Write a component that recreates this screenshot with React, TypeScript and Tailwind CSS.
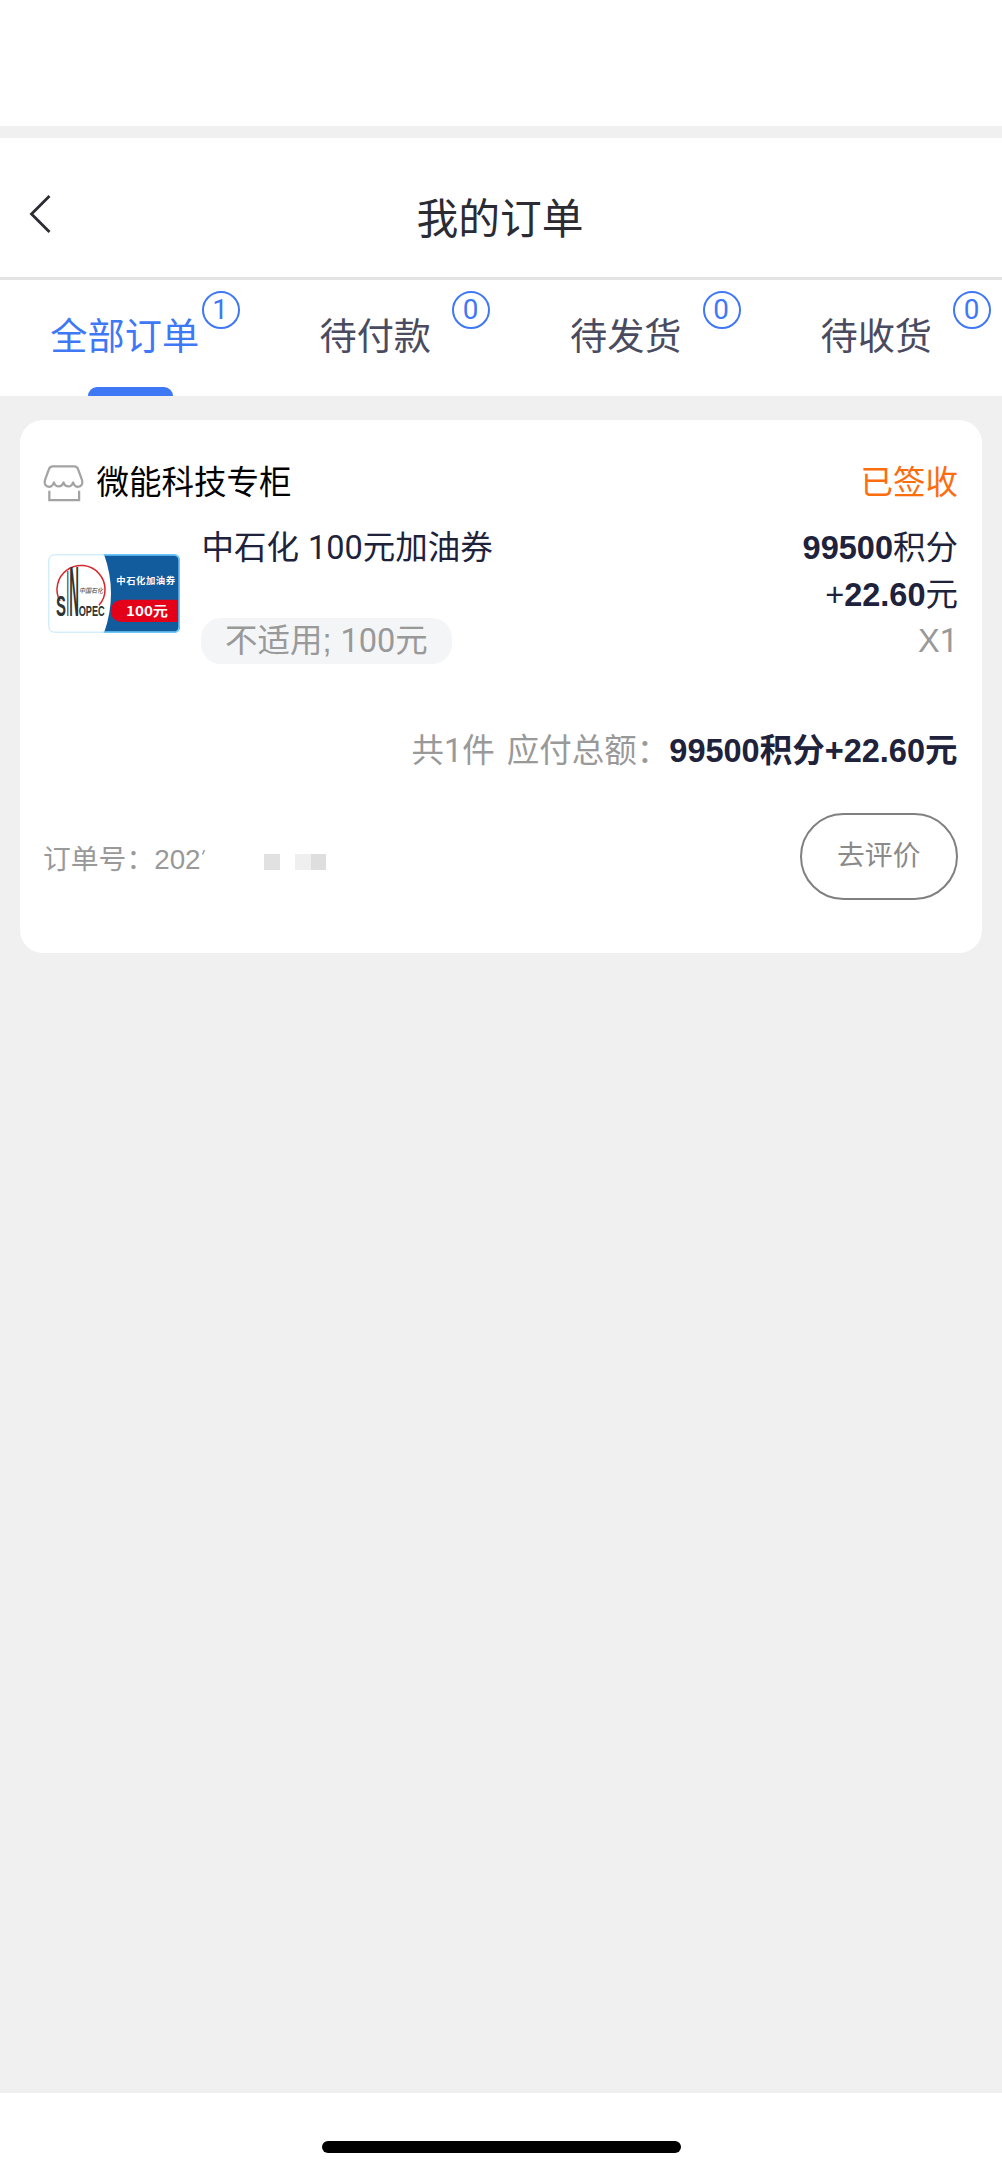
import React from "react";

const tabs = [
  { label: "全部订单", count: 1, active: true },
  { label: "待付款", count: 0, active: false },
  { label: "待发货", count: 0, active: false },
  { label: "待收货", count: 0, active: false },
];

function Num({ children }: { children: React.ReactNode }) {
  return <span className="font-['Roboto',sans-serif] leading-none">{children}</span>;
}

function BackIcon() {
  return (
    <svg width="24" height="40" viewBox="0 0 24 40" fill="none" stroke="#2b2b33" strokeWidth="2.8">
      <path d="M21.5 2 L3.500 20 L21.500 38" />
    </svg>
  );
}

function ShopIcon() {
  return (
    <svg className="-mt-[1px]" width="41" height="38" viewBox="0 0 42 38" fill="none" stroke="#a3a3a3" strokeWidth="2.3" strokeLinejoin="round">
      <path d="M10 2 H32 Q35 2 36 5 L40 16 Q41.500 22.500 35.500 23 Q32 22.500 30.800 18.500 Q29.500 22.500 26 22.500 Q22.500 22.500 21 18.500 Q19.500 22.500 16 22.500 Q12.500 22.500 11.200 18.500 Q10 22.500 6.500 23 Q0.500 22.500 2 16 L6 5 Q7 2 10 2 Z" />
      <path d="M6.500 27 V36.500 H37 V27" strokeLinejoin="miter" />
    </svg>
  );
}

function CouponImage() {
  return (
    <svg width="134" height="81" viewBox="22 39 402 243">
      <defs>
        <clipPath id="coupon">
          <rect x="26" y="43" width="395" height="235" rx="19" />
        </clipPath>
      </defs>
      <rect x="26" y="43" width="395" height="235" rx="19" fill="#ffffff" />
      <g clipPath="url(#coupon)">
        <path d="M192 40 Q236 160 192 282 H424 V40 Z" fill="#125c9e" />
        <path d="M414 179 H250 Q216 180 213 212 Q215 245 250 246 H414 Z" fill="#e30018" />
      </g>
      <path d="M192 44.500 H45 Q27.500 45 27.500 62 V260 Q28 276.500 45 276.500 H192" fill="none" stroke="#bfe6fb" strokeWidth="3" />
      <path d="M192 44.500 H402 Q418.500 45 418.500 62 V260 Q418 276.500 402 276.500 H192" fill="none" stroke="#6cc8fb" strokeWidth="5" />
      <path d="M61 183 A72 72 0 1 1 178 196" fill="none" stroke="#d8262c" strokeWidth="4.5" />
      <g fill="#2e3432" fontFamily="Liberation Sans, sans-serif" fontWeight="700">
        <text transform="translate(49 229) scale(0.52 1)" fontSize="86">S</text>
        <text transform="translate(81 229) scale(0.11 1)" fontSize="195">I</text>
        <text transform="translate(89 229) scale(0.19 1)" fontSize="212">N</text>
        <text x="117" y="228" textLength="78" lengthAdjust="spacingAndGlyphs" fontSize="43">OPEC</text>
      </g>
      <text x="118" y="160" textLength="72" lengthAdjust="spacingAndGlyphs" fontSize="20" fontStyle="italic" fill="#333838" fontFamily="Noto Sans CJK SC, sans-serif">中国石化</text>
      <text x="230" y="132" textLength="176" fontSize="28" fontWeight="700" fill="#ffffff" fontFamily="Noto Sans CJK SC, sans-serif">中石化加油券</text>
      <text x="259" y="229" textLength="126" lengthAdjust="spacingAndGlyphs" fontSize="40" fontWeight="700" fill="#ffffff" fontFamily="Noto Sans CJK SC, sans-serif">100元</text>
    </svg>
  );
}

export default function App() {
  return (
    <div className="flex h-[2172px] w-[1002px] flex-col bg-[#f0f0f0] font-['Liberation_Sans','Noto_Sans_CJK_SC',sans-serif]">
      <div className="mb-[12px] h-[126px] shrink-0 bg-white" />

      <header className="flex h-[142px] shrink-0 items-start border-b-[3px] border-[#e3e3e3] bg-white">
        <div className="mt-[56px] h-[40px] w-[80px] pl-[28px]">
          <BackIcon />
        </div>
        <h1 className="mt-[52px] flex-1 text-center text-[41.75px] leading-[60px] text-[#2b2b33]">我的订单</h1>
        <div className="w-[82px]" />
      </header>

      <nav className="grid h-[116px] shrink-0 grid-cols-4 bg-white">
        {tabs.map((tab) => (
          <div key={tab.label} className="relative flex justify-center pr-[1px] pt-[30px]">
            <span className={tab.active ? "text-[37.2px] leading-[54px] text-[#3f78f5]" : "text-[37.2px] leading-[54px] text-[#4a4b60]"}>
              {tab.label}
            </span>
            <span className="absolute left-[201.500px] top-[11px] flex size-[38px] items-center justify-center rounded-full border-2 border-[#3f78f5] pr-[1px] font-['Roboto',sans-serif] text-[27.8px] leading-[34px] text-[#3f78f5]">
              {tab.count}
            </span>
            {tab.active && <span className="absolute bottom-0 left-[88px] h-[9px] w-[85px] rounded-t-[9px] bg-[#3f78f5]" />}
          </div>
        ))}
      </nav>

      <main className="flex-1 px-[20px] pt-[24px]">
        <section className="h-[533px] rounded-[23px] bg-white pl-[23px] pr-[24px] pt-[39px]">
          <div className="flex h-[48px] items-center text-[32.5px] leading-[48px]">
            <ShopIcon />
            <span className="ml-[12.500px] text-black">微能科技专柜</span>
            <span className="ml-auto text-[#fb6d0d]">已签收</span>
          </div>

          <div className="mt-[18px] flex text-[32.5px] leading-[46.500px] text-[#20223c]">
            <div className="ml-[4px] mt-[28px]">
              <CouponImage />
            </div>
            <div className="ml-[19.500px] flex flex-col items-start">
              <span className="pl-[1px]">中石化 <Num>100</Num>元加油券</span>
              <span className="mt-[46px] h-[46.500px] rounded-[20px] bg-[#f4f5f7] px-[24.500px] leading-[47.500px] text-[#999999]">不适用; <Num>100</Num>元</span>
            </div>
            <div className="ml-auto text-right">
              <div><b>99500</b>积分</div>
              <div>+<b>22.60</b>元</div>
              <div className="text-[#999999]">X<Num>1</Num></div>
            </div>
          </div>

          <div className="mr-[0.500px] mt-[63px] flex justify-end text-[32.5px] leading-[46px] text-[#999999]">
            <span className="mr-[12px]">共<Num>1</Num>件</span>
            <span>应付总额：</span>
            <b className="text-[#20223c]">99500积分+22.60元</b>
          </div>

          <div className="mt-[39px] flex items-start text-[27.800px] leading-[40px]">
            <div className="mt-[27px] flex h-[40px] text-[#999999]">
              <span>订单号：202</span>
              <svg className="mt-[9px]" width="6" height="10" viewBox="0 0 6 10" fill="none" stroke="#999999" strokeWidth="1.5">
                <path d="M3.500 1 L1.500 5.500" />
              </svg>
              <div className="ml-[57px] mt-[14px] flex h-[16px]">
                <span className="w-[16px] bg-[#e1e1e1]" />
                <span className="ml-[15px] w-[16px] bg-[#efefef]" />
                <span className="w-[15px] bg-[#dedede]" />
              </div>
            </div>
            <button className="ml-auto h-[87px] w-[158.500px] rounded-full border-2 border-[#808080] pb-[1px] text-[#8a8a8a]">去评价</button>
          </div>
        </section>
      </main>

      <footer className="flex h-[79.500px] shrink-0 justify-center bg-white pt-[48.500px]">
        <div className="h-[12px] w-[359px] rounded-full bg-black" />
      </footer>
    </div>
  );
}
